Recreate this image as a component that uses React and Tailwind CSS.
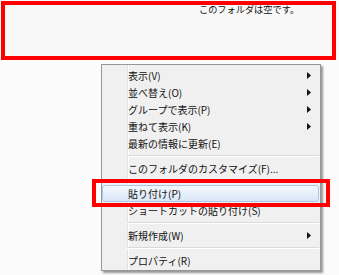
import React from "react";

const font = { fontFamily: '"Noto Sans CJK JP", "Noto Sans", sans-serif' };

const Arrow = () => (
  <svg width="4" height="7" viewBox="0 0 4 7" className="absolute right-[9px] top-[5px]">
    <path d="M0 0L4 3.5L0 7Z" fill="#111" />
  </svg>
);

function Item({ label, arrow, highlight }) {
  if (highlight) {
    return (
      <div className="relative h-[17px] mr-[1px] flex items-center pl-[25px] rounded-[3px] border border-[#a9c8ee] bg-gradient-to-b from-[#f4f8fd] to-[#d9e7f7]">
        {label}
      </div>
    );
  }
  return (
    <div className="relative h-[17px] flex items-center pl-[26px]">
      {label}
      {arrow && <Arrow />}
    </div>
  );
}

const Sep = () => (
  <div className="h-[8px] flex flex-col justify-center pl-[25px] pr-[1px]">
    <div className="h-px bg-[#dadada]" />
    <div className="h-px bg-white" />
  </div>
);

export default function App() {
  return (
    <div className="relative w-[339px] h-[275px] overflow-hidden bg-[#fbfbfb] text-[#111]" style={font}>
      <div className="ml-[1px] mt-[1px] w-[335px] h-[59px] border-4 border-[#ff0000] bg-[#f8f8f8]">
        <div className="-mt-[2px] pl-[194px] text-[9.2px] leading-[12px]">このフォルダは空です。</div>
      </div>

      <div className="absolute left-[101px] top-[64px] w-[220px] border border-[#979797] bg-[#f0f0f0] pt-[2px] pb-[1px] text-[10px] leading-[12px] shadow-[2px_2px_2px_rgba(0,0,0,0.4)]">
        <div className="absolute left-[25px] top-0 bottom-0 w-px bg-[#e2e3e3]" />
        <div className="absolute left-[26px] top-0 bottom-0 w-px bg-white" />
        <div className="relative">
          <Item label="表示(V)" arrow />
          <Item label="並べ替え(O)" arrow />
          <Item label="グループで表示(P)" arrow />
          <Item label="重ねて表示(K)" arrow />
          <Item label="最新の情報に更新(E)" />
          <Sep />
          <Item label="このフォルダのカスタマイズ(F)..." />
          <Sep />
          <Item label="貼り付け(P)" highlight />
          <Item label="ショートカットの貼り付け(S)" />
          <Sep />
          <Item label="新規作成(W)" arrow />
          <Sep />
          <Item label="プロパティ(R)" />
        </div>
      </div>

      <div className="absolute left-[92px] top-[179px] w-[238px] h-[28px] border-4 border-[#ff0000]" />
    </div>
  );
}
